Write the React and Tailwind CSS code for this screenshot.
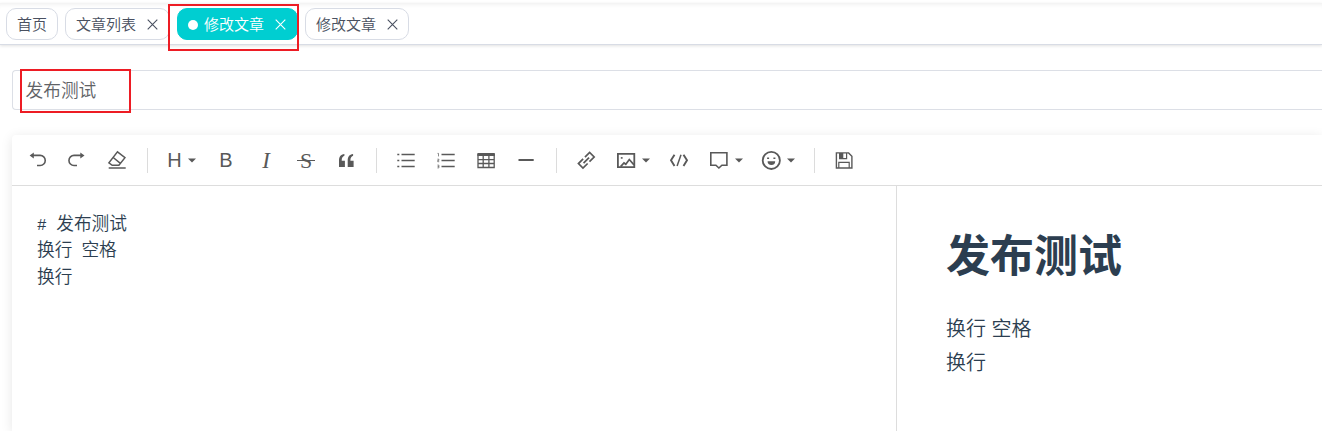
import React from "react";

function Tab({ label, active, closable, width }) {
  return (
    <div
      className={`flex h-8 shrink-0 items-center rounded-[10px] border text-[15px] font-[350] leading-8 ${width} ${
        active
          ? "border-[#00ced1] bg-[#00ced1] text-white"
          : "border-[#d8dce5] bg-white text-[#495060]"
      } ${closable ? "pl-[10px]" : "justify-center"}`}
    >
      {active && <span className="mr-[6px] mt-px h-[10px] w-[10px] rounded-full bg-white" />}
      <span className="whitespace-nowrap pt-px">{label}</span>
      {closable && (
        <svg className="ml-[10.5px] h-[11px] w-[11px]" viewBox="0 0 11 11" fill="none" stroke="currentColor" strokeWidth="1.1">
          <path d="M.7.7l9.6 9.6M10.3.7L.7 10.3" />
        </svg>
      )}
    </div>
  );
}

function Icon({ children }) {
  return (
    <svg
      className="h-5 w-5 shrink-0"
      viewBox="0 0 20 20"
      fill="none"
      stroke="currentColor"
      strokeWidth="1.6"
    >
      {children}
    </svg>
  );
}

function Tool({ width = "w-10", children }) {
  return <button className={`flex h-full shrink-0 items-center justify-center ${width}`}>{children}</button>;
}

function DropTool({ className = "w-[52px] pl-[10px]", gap = "ml-[6px]", children }) {
  return (
    <button className={`flex h-full shrink-0 items-center ${className}`}>
      {children}
      <svg className={`mt-px h-[5px] w-2 shrink-0 ${gap}`} viewBox="0 0 8 5" fill="currentColor">
        <path d="M0 .4h8L4 4.6z" />
      </svg>
    </button>
  );
}

function Divider({ width = "w-5" }) {
  return (
    <div className={`flex shrink-0 justify-center ${width}`}>
      <span className="h-[25px] w-px bg-[#dcdcdc]" />
    </div>
  );
}

function Toolbar() {
  return (
    <div className="flex h-[51px] items-center border-b border-[#dddddd] pl-[6px] text-[#595959]">
      <Tool>
        <Icon>
          <path d="M4 5.4h8.2a5 5 0 0 1 0 10.1H9" />
          <path d="M1.6 5.4l4.2-3v6z" fill="currentColor" stroke="none" />
        </Icon>
      </Tool>
      <Tool width="w-[38px]">
        <Icon>
          <path d="M15 5.4H7a5 5 0 0 0 0 10.1h3" />
          <path d="M17.5 5.4l-4.2-3v6z" fill="currentColor" stroke="none" />
        </Icon>
      </Tool>
      <Tool>
        <Icon>
          <path d="M11.5 1.9l7.5 5.7-6.1 7.7H6.2l-3.3-2.5zM7.2 7.5l7.2 5.9M2.7 18.1h17" strokeWidth="1.5" />
        </Icon>
      </Tool>
      <Divider width="w-[22px]" />
      <DropTool className="w-12 pl-[9px]" gap="ml-[6px]">
        <span className="w-[15px] text-[20px] leading-5">H</span>
      </DropTool>
      <Tool>
        <span className="text-[20px] leading-5">B</span>
      </Tool>
      <Tool>
        <span className="pt-px font-['Liberation_Serif',serif] text-[23px] italic leading-5">I</span>
      </Tool>
      <Tool>
        <span className="relative top-px font-['Liberation_Serif',serif] text-[22px] leading-5">
          S
          <span className="absolute -left-[3px] top-[9px] h-px w-[18px] bg-[#595959]" />
        </span>
      </Tool>
      <Tool>
        <Icon>
          <path
            d="M8.4 3.9C4.6 4.3 3 6.8 3 10.4V17h5.9v-6.3H5.7c0-2.6.8-4.3 2.7-4.9zM17.1 3.9c-3.8.4-5.4 2.9-5.4 6.5V17h5.9v-6.3h-3.2c0-2.6.8-4.3 2.7-4.9z"
            fill="currentColor"
            stroke="none"
          />
        </Icon>
      </Tool>
      <Divider />
      <Tool>
        <Icon>
          <path d="M5.5 4.5h13.2M5.5 10.5h13.2M5.5 16.5h13.2" />
          <path d="M1.3 4.5h2M1.3 10.5h2M1.3 16.5h2" />
        </Icon>
      </Tool>
      <Tool>
        <Icon>
          <path d="M5.5 4.5h13.2M5.5 10.5h13.2M5.5 16.5h13.2" />
          <path d="M1.5 3.4h1v3M1.4 9.2h1.5v1.2H1.7v1.3h1.5M1.4 15.1h1.5v2.8H1.4M1.6 16.5h1.3" strokeWidth=".7" />
        </Icon>
      </Tool>
      <Tool>
        <Icon>
          <path d="M1.4 3h17.4v3H1.4z" fill="currentColor" stroke="none" />
          <path d="M2 4v13.5h16.2V4M2 9.7h16.2M2 13.5h16.2M7.2 6v11.5M12.9 6v11.5" strokeWidth="1.3" />
        </Icon>
      </Tool>
      <Tool>
        <Icon>
          <path d="M2.5 10h15.2" strokeWidth="2" />
        </Icon>
      </Tool>
      <Divider />
      <Tool>
        <Icon>
          <g transform="rotate(-45 10.3 10.3)" strokeWidth="1.7">
            <path d="M9 13.5H2.4V7.1H9" />
            <path d="M11.6 7.1h6.6v6.4h-6.6" />
            <path d="M6.4 10.3h7.8" />
          </g>
        </Icon>
      </Tool>
      <DropTool>
        <Icon>
          <path d="M1.9 3.8h16.4v13.3H1.9z" strokeWidth="1.8" />
          <path d="M4.6 16.6l3.4-3.6 1.8 1.3 3.5-4.8 4.7 5.4" strokeWidth="1.7" />
          <path d="M4.8 7.9h1.8" />
        </Icon>
      </DropTool>
      <Tool width="w-[42px]">
        <Icon>
          <path d="M5.5 4.7L2 10.3l3.5 5.6M14.5 4.7l3.5 5.6-3.5 5.6" strokeWidth="1.9" />
          <path d="M12 4.7L8.1 16" strokeWidth="1.5" />
        </Icon>
      </Tool>
      <DropTool className="w-[52px] pl-[9px]" gap="ml-[6px]">
        <Icon>
          <path d="M1.8 2.7h16.1v12.5h-5l-3 2.8-3-2.8H1.8z" />
        </Icon>
      </DropTool>
      <DropTool className="w-[52px] pl-[9px]" gap="ml-[6px]">
        <Icon>
          <circle cx="10.3" cy="10.4" r="8.6" strokeWidth="1.8" />
          <path d="M6.1 8.2h2M12.4 8.2h2" strokeWidth="1.6" />
          <path d="M6.6 11.3h7.6a3.8 3.8 0 0 1-7.6 0z" fill="currentColor" stroke="none" />
        </Icon>
      </DropTool>
      <Divider />
      <Tool>
        <Icon>
          <path d="M2.4 2.9h12.2l3.3 3.3v11.8H2.4z" strokeWidth="1.4" />
          <path d="M4.8 18v-5.7h10.4V18M5.6 3v5.6h7V3" strokeWidth="1.2" />
          <path d="M5.6 3h3.7v5.2H5.6z" fill="currentColor" stroke="none" />
        </Icon>
      </Tool>
    </div>
  );
}

export default function App() {
  return (
    <div className="relative flex h-[431px] w-full flex-col overflow-hidden bg-white pt-[3px] font-['Liberation_Sans','Noto_Sans_CJK_SC',sans-serif]">
      <nav className="flex h-[42px] shrink-0 gap-[7px] border-b border-[#d8dce5] pl-[6px] pt-[5px] shadow-[inset_0_5px_5px_-4px_rgba(0,0,0,0.08),0_1px_3px_0_rgba(0,0,0,0.12)]">
        <Tab label="首页" width="w-[52px]" />
        <Tab label="文章列表" width="w-[105px]" closable />
        <Tab label="修改文章" width="w-[121px]" closable active />
        <Tab label="修改文章" width="w-[104px]" closable />
      </nav>

      <main className="flex min-h-0 flex-1 flex-col pl-3 pt-[25px]">
        <div className="flex h-10 shrink-0 items-center rounded-l-[4px] border border-r-0 border-[#dcdfe6] pl-[12.5px] pt-[2px] text-[17.7px] font-[350] text-[#606266]">
          发布测试
        </div>

        <section className="mt-[25px] flex min-h-0 flex-1 flex-col rounded-tl-[4px] bg-white shadow-[0_2px_12px_0_rgba(0,0,0,0.1)]">
          <Toolbar />
          <div className="flex min-h-0 flex-1 text-[#2c3e50]">
            <div className="w-[885px] shrink-0 whitespace-pre border-r border-[#dddddd] pl-[25px] pt-[25px] text-[17.7px] font-[350] leading-[26.4px]">
              <p className="h-[26px]"><span className="font-['Liberation_Mono',monospace] text-[16px]"># </span>发布测试</p>
              <p className="h-[27px]">换行<span className="inline-block h-0 w-[9px]"> </span>空格</p>
              <p>换行</p>
            </div>
            <article className="flex-1 pl-[49px] pt-[43px]">
              <h1 className="text-[44px] font-bold leading-[56px]">发布测试</h1>
              <p className="mt-[27px] text-[20px] font-[350] leading-[34px]">
                换行 空格
                <br />
                换行
              </p>
            </article>
          </div>
        </section>
      </main>

      <div className="absolute left-[168px] top-1 h-[47px] w-[131px] border-2 border-[#ed1c24]" />
      <div className="absolute left-5 top-[69px] h-11 w-[111px] border-2 border-[#ed1c24]" />
    </div>
  );
}
